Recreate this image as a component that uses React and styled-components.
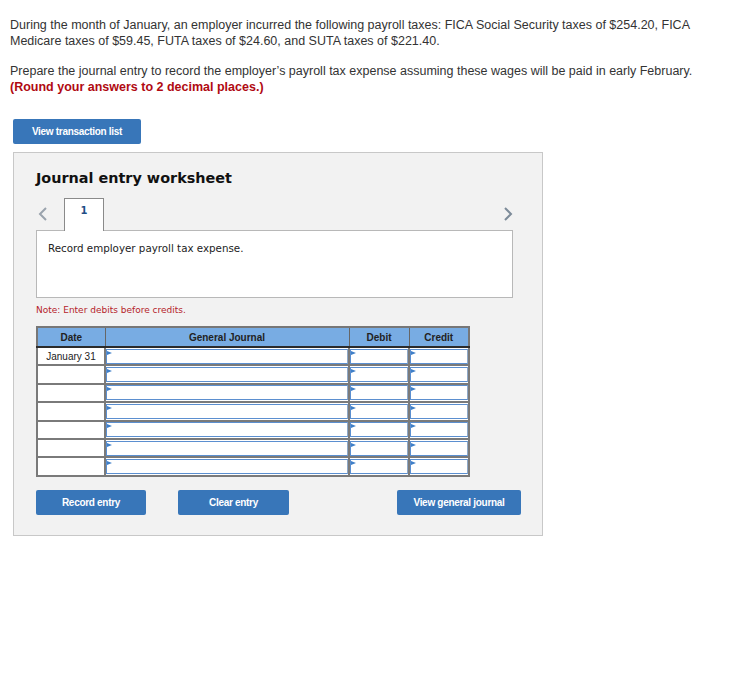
import styled, { createGlobalStyle } from "styled-components";

const GlobalStyle = createGlobalStyle`
  body {
    margin: 0;
    background: #fff;
    font-family: "Liberation Sans", Arial, sans-serif;
  }
`;

const rows = ["January 31", "", "", "", "", "", ""];

function App() {
  return (
    <>
      <GlobalStyle />
      <Page>
        <Question>
          During the month of January, an employer incurred the following payroll taxes: FICA Social Security taxes of $254.20, FICA
          <br />
          Medicare taxes of $59.45, FUTA taxes of $24.60, and SUTA taxes of $221.40.
        </Question>
        <Question>
          Prepare the journal entry to record the employer’s payroll tax expense assuming these wages will be paid in early February.
          <br />
          <Round>(Round your answers to 2 decimal places.)</Round>
        </Question>
        <BlueButton $width={128}>View transaction list</BlueButton>
        <Worksheet>
          <Title>Journal entry worksheet</Title>
          <TabBar>
            <Arrow>
              <svg width="10" height="14" viewBox="0 0 10 14">
                <path d="M8 1 L2 7 L8 13" fill="none" stroke="#9aa3ad" strokeWidth="2" />
              </svg>
            </Arrow>
            <Tab>1</Tab>
            <Spacer />
            <Arrow>
              <svg width="10" height="14" viewBox="0 0 10 14">
                <path d="M2 1 L8 7 L2 13" fill="none" stroke="#7d8b99" strokeWidth="2" />
              </svg>
            </Arrow>
          </TabBar>
          <Description>Record employer payroll tax expense.</Description>
          <Note>Note: Enter debits before credits.</Note>
          <Journal>
            <colgroup>
              <col style={{ width: 68 }} />
              <col style={{ width: 244 }} />
              <col style={{ width: 60 }} />
              <col style={{ width: 60 }} />
            </colgroup>
            <thead>
              <tr>
                <Head>Date</Head>
                <Head>General Journal</Head>
                <Head>Debit</Head>
                <Head>Credit</Head>
              </tr>
            </thead>
            <tbody>
              {rows.map((date, i) => (
                <tr key={i}>
                  <DateCell>{date}</DateCell>
                  <InputCell><Field /></InputCell>
                  <InputCell><Field /></InputCell>
                  <InputCell><Field /></InputCell>
                </tr>
              ))}
            </tbody>
          </Journal>
          <Actions>
            <BlueButton $width={110}>Record entry</BlueButton>
            <BlueButton $width={111}>Clear entry</BlueButton>
            <Spacer />
            <BlueButton $width={124}>View general journal</BlueButton>
          </Actions>
        </Worksheet>
      </Page>
    </>
  );
}

const Page = styled.div`
  padding: 17px 10px 40px 10px;
  width: 733px;
  box-sizing: border-box;
`;

const Question = styled.p`
  margin: 0 0 14px 0;
  font-size: 12.5px;
  line-height: 16px;
  color: #333;
`;

const Round = styled.span`
  color: #b00a12;
  font-weight: bold;
`;

const BlueButton = styled.button`
  width: ${(p) => p.$width}px;
  height: 25px;
  margin: 0;
  padding: 0;
  border: none;
  border-radius: 2px;
  background: #3876b9;
  color: #fff;
  font-family: "Liberation Sans", Arial, sans-serif;
  font-weight: bold;
  font-size: 10px;
  letter-spacing: -0.3px;
  cursor: pointer;
  display: block;
  ${Question} + & {
    margin: 24px 0 0 3px;
  }
`;

const Worksheet = styled.div`
  margin: 8px 0 0 3px;
  width: 530px;
  box-sizing: border-box;
  background: #f2f2f2;
  border: 1px solid #c8c8c8;
  padding: 16px 0 20px 22px;
`;

const Title = styled.h2`
  margin: 0;
  font-family: "DejaVu Sans", Verdana, sans-serif;
  font-size: 14.4px;
  line-height: 18px;
  color: #111;
  font-weight: bold;
`;

const TabBar = styled.div`
  display: flex;
  align-items: center;
  margin-top: 11px;
  width: 486px;
  height: 32px;
`;

const Arrow = styled.div`
  width: 28px;
  display: flex;
  justify-content: center;
  &:first-child {
    width: 14px;
    justify-content: flex-start;
    padding-left: 2px;
    margin-right: 12px;
  }
`;

const Tab = styled.div`
  width: 40px;
  height: 33px;
  box-sizing: border-box;
  border: 1px solid #8a8a8a;
  border-bottom: none;
  background: #fff;
  text-align: center;
  padding-top: 6px;
  font-family: "DejaVu Sans", Verdana, sans-serif;
  font-weight: bold;
  font-size: 10px;
  color: #1f4f86;
  position: relative;
  z-index: 1;
  align-self: flex-start;
`;

const Spacer = styled.div`
  flex: 1;
`;

const Description = styled.div`
  width: 477px;
  height: 68px;
  box-sizing: border-box;
  background: #fff;
  border: 1px solid #b8b8b8;
  padding: 11px 11px;
  font-family: "DejaVu Sans", Verdana, sans-serif;
  font-size: 10.3px;
  color: #222;
`;

const Note = styled.div`
  margin-top: 6px;
  font-family: "DejaVu Sans", Verdana, sans-serif;
  font-size: 9px;
  color: #b5222a;
  line-height: 12px;
`;

const Journal = styled.table`
  margin-top: 10px;
  border-collapse: collapse;
  table-layout: fixed;
  width: 432px;
  border: 2px solid #777;
`;

const Head = styled.th`
  height: 18px;
  padding: 0;
  background: #78ace3;
  border: 1px solid #666;
  border-bottom: 2px solid #2b2b2b;
  font-family: "Liberation Sans", Arial, sans-serif;
  font-size: 10px;
  font-weight: bold;
  color: #222;
  text-align: center;
`;

const DateCell = styled.td`
  height: 16.4px;
  padding: 0;
  background: #fff;
  border: 2px solid #7a7a7a;
  font-family: "Liberation Sans", Arial, sans-serif;
  font-size: 10px;
  color: #222;
  text-align: center;
`;

const InputCell = styled.td`
  height: 16.4px;
  padding: 0;
  border: 2px solid #7a7a7a;
  background: #fff;
`;

const Field = styled.div`
  height: 15px;
  box-sizing: border-box;
  border: 1px solid #5b8fd0;
  border-right-color: #8fa9c8;
  background: #fff;
  position: relative;
  &::before {
    content: "";
    position: absolute;
    left: 0;
    top: 1px;
    border-left: 5px solid #3f7fc8;
    border-top: 2px solid transparent;
    border-bottom: 2px solid transparent;
  }
`;

const Actions = styled.div`
  display: flex;
  width: 485px;
  margin-top: 13px;
  gap: 32px;
  ${BlueButton} {
    margin: 0;
  }
  ${Spacer} {
    margin-left: -32px;
  }
`;

export default App;
